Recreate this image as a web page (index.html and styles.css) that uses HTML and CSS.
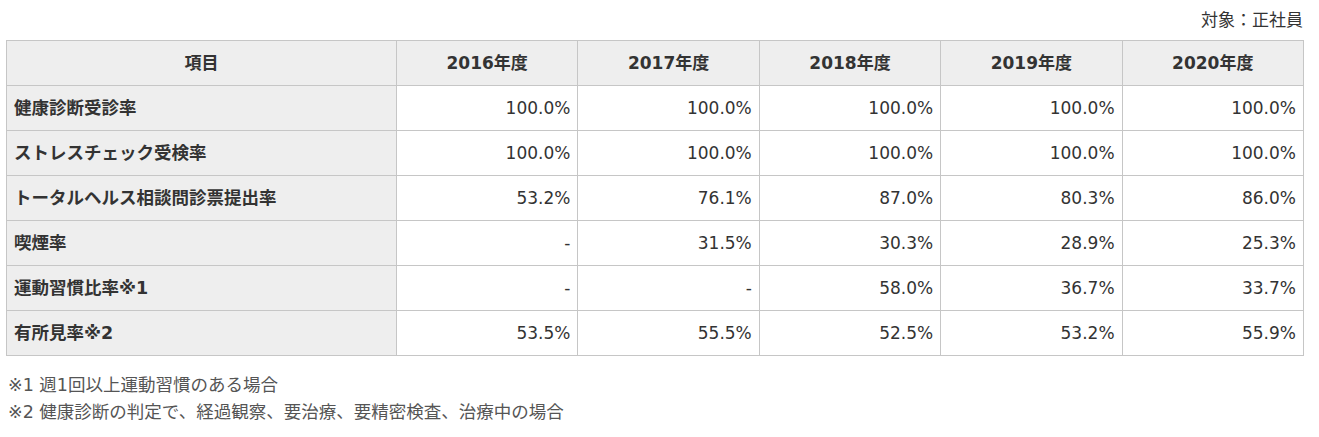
FILE: index.html
```html
<!DOCTYPE html>
<html lang="ja">
<head>
<meta charset="utf-8">
<link rel="stylesheet" href="styles.css">
</head>
<body>
<div class="wrap">
  <p class="target">対象：正社員</p>
  <table class="data">
    <colgroup>
      <col class="c-item"><col class="c-year"><col class="c-year"><col class="c-year"><col class="c-year"><col class="c-year">
    </colgroup>
    <thead>
      <tr><th>項目</th><th>2016年度</th><th>2017年度</th><th>2018年度</th><th>2019年度</th><th>2020年度</th></tr>
    </thead>
    <tbody>
      <tr><th>健康診断受診率</th><td>100.0%</td><td>100.0%</td><td>100.0%</td><td>100.0%</td><td>100.0%</td></tr>
      <tr><th>ストレスチェック受検率</th><td>100.0%</td><td>100.0%</td><td>100.0%</td><td>100.0%</td><td>100.0%</td></tr>
      <tr><th>トータルヘルス相談問診票提出率</th><td>53.2%</td><td>76.1%</td><td>87.0%</td><td>80.3%</td><td>86.0%</td></tr>
      <tr><th>喫煙率</th><td>-</td><td>31.5%</td><td>30.3%</td><td>28.9%</td><td>25.3%</td></tr>
      <tr><th>運動習慣比率※1</th><td>-</td><td>-</td><td>58.0%</td><td>36.7%</td><td>33.7%</td></tr>
      <tr><th>有所見率※2</th><td>53.5%</td><td>55.5%</td><td>52.5%</td><td>53.2%</td><td>55.9%</td></tr>
    </tbody>
  </table>
  <div class="notes">
    <p>※1 週1回以上運動習慣のある場合</p>
    <p>※2 健康診断の判定で、経過観察、要治療、要精密検査、治療中の場合</p>
  </div>
</div>
</body>
</html>
```
FILE: styles.css
```css
html, body {
  margin: 0;
  padding: 0;
  background: #fff;
}
body {
  font-family: "DejaVu Sans", "Noto Sans CJK JP", sans-serif;
  color: #333;
  font-size: 17px;
}
.wrap {
  width: 1297px;
  padding: 8px 0 0 6px;
}
.target {
  margin: 0 0 7px;
  text-align: right;
  line-height: 25px;
  font-size: 17px;
}
.data {
  width: 1297px;
  border-collapse: collapse;
  table-layout: fixed;
}
.c-item { width: 390px; }
.c-year { width: 181.4px; }
.data th,
.data td {
  border: 1px solid #c6c6c6;
  height: 45px;
  box-sizing: border-box;
  padding: 0 7px;
  line-height: 24px;
  font-size: 17.5px;
}
.data thead th {
  background: #eeeeee;
  text-align: center;
  font-weight: bold;
  font-size: 17px;
}
.data tbody th {
  background: #eeeeee;
  text-align: left;
  font-weight: bold;
}
.data td {
  text-align: right;
  background: #fff;
  font-size: 17px;
}
.notes {
  margin-top: 16px;
  padding-left: 2px;
}
.notes p {
  margin: 0;
  line-height: 27px;
  font-size: 17.5px;
  color: #555;
}
```
